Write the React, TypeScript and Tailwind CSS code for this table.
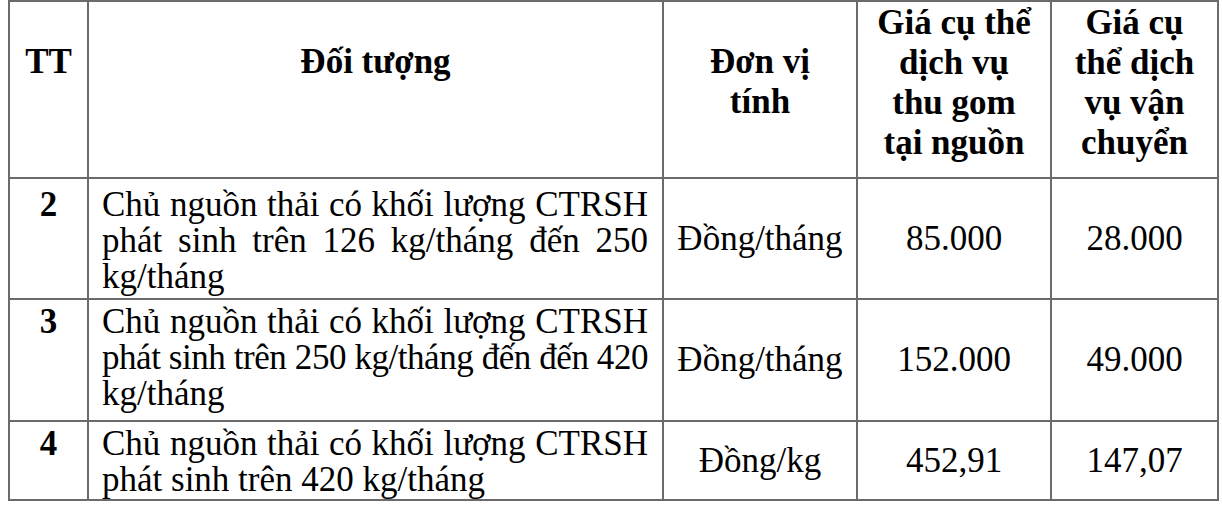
import React from 'react'

interface Row {
  tt: string
  desc: string
  unit: string
  collect: string
  transport: string
  height: string
  pad: string
  tight?: boolean
}

const rows: Row[] = [
  {
    tt: '2',
    desc: 'Chủ nguồn thải có khối lượng CTRSH phát sinh trên 126 kg/tháng đến 250 kg/tháng',
    unit: 'Đồng/tháng',
    collect: '85.000',
    transport: '28.000',
    height: 'h-[121px]',
    pad: 'pt-[8px]',
  },
  {
    tt: '3',
    desc: 'Chủ nguồn thải có khối lượng CTRSH',
    unit: 'Đồng/tháng',
    collect: '152.000',
    transport: '49.000',
    height: 'h-[122px]',
    pad: 'pt-[4px]',
    tight: true,
  },
  {
    tt: '4',
    desc: 'Chủ nguồn thải có khối lượng CTRSH phát sinh trên 420 kg/tháng',
    unit: 'Đồng/kg',
    collect: '452,91',
    transport: '147,07',
    height: 'h-[79px]',
    pad: 'pt-[4px]',
  },
]

const cell = 'border-2 border-[#6b6b6b] p-0'

export default function App() {
  return (
    <div className="w-[1222px] h-[506px] bg-white pl-[8px] text-black font-['Liberation_Serif','Times_New_Roman',serif]">
      <table className="table-fixed border-collapse w-[1209px]">
        <colgroup>
          <col className="w-[79px]" />
          <col className="w-[575px]" />
          <col className="w-[194px]" />
          <col className="w-[194px]" />
          <col className="w-[167px]" />
        </colgroup>
        <thead>
          <tr className="h-[177px] text-[35px] leading-[40px] font-bold">
            <th className={`${cell} align-top text-center pt-[40px]`}>TT</th>
            <th className={`${cell} align-top text-center pt-[40px]`}>Đối tượng</th>
            <th className={`${cell} align-top text-center pt-[40px]`}>
              Đơn vị
              <br />
              tính
            </th>
            <th className={`${cell} align-top text-center pt-[1px]`}>
              Giá cụ thể
              <br />
              dịch vụ
              <br />
              thu gom
              <br />
              tại nguồn
            </th>
            <th className={`${cell} align-top text-center pt-[1px]`}>
              Giá cụ
              <br />
              thể dịch
              <br />
              vụ vận
              <br />
              chuyển
            </th>
          </tr>
        </thead>
        <tbody className="text-[35px] leading-[36px]">
          {rows.map((r) => (
            <tr key={r.tt} className={r.height}>
              <td className={`${cell} align-top text-center font-bold ${r.pad}`}>{r.tt}</td>
              <td className={`${cell} align-top text-justify pl-[13px] pr-[14px] ${r.pad}`}>
                {r.tight ? (
                  <>
                    <div className="[text-align-last:justify]">{r.desc}</div>
                    <div className="whitespace-nowrap tracking-[-0.45px] [text-align-last:justify]">
                      phát sinh trên 250 kg/tháng đến đến 420
                    </div>
                    <div>kg/tháng</div>
                  </>
                ) : (
                  r.desc
                )}
              </td>
              <td className={`${cell} align-middle text-center`}>{r.unit}</td>
              <td className={`${cell} align-middle text-center`}>{r.collect}</td>
              <td className={`${cell} align-middle text-center`}>{r.transport}</td>
            </tr>
          ))}
        </tbody>
      </table>
    </div>
  )
}
